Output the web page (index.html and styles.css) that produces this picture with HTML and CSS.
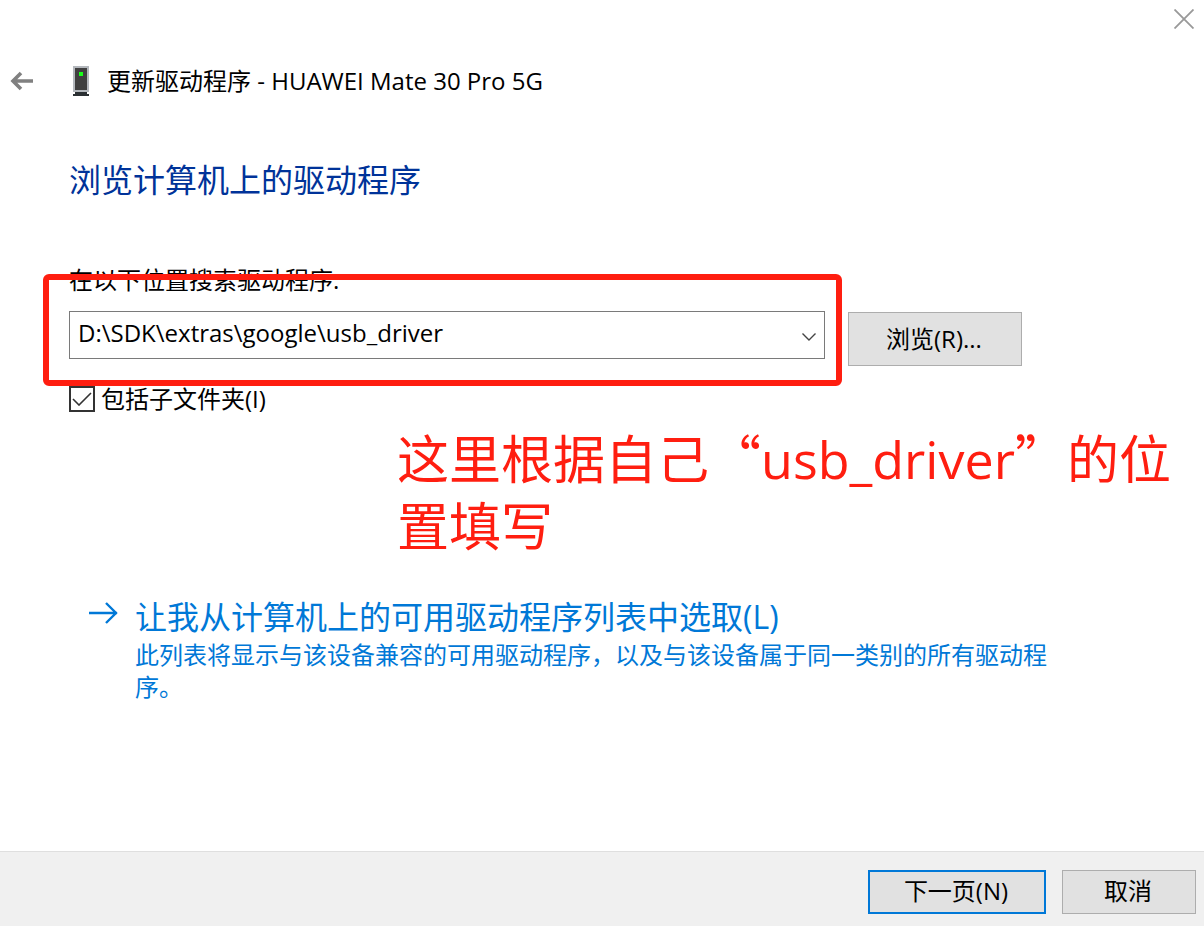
FILE: index.html
```
<!DOCTYPE html>
<html lang="zh-CN">
<head>
    <meta charset="UTF-8">
    <meta name="viewport" content="width=device-width, initial-scale=1.0">
    <title>更新驱动程序</title>
    <link rel="stylesheet" href="styles.css">
</head>
<body>

<div class="titlebar">
    <button type="button" class="icon-btn" aria-label="关闭">
        <svg width="20" height="20" viewBox="0 0 20 20"><path d="M0.5 0.5L19.5 19.5M19.5 0.5L0.5 19.5" stroke="#999" stroke-width="1.8"/></svg>
    </button>
</div>

<header class="header">
    <button type="button" class="icon-btn" aria-label="返回">
        <svg width="24" height="20" viewBox="0 0 24 20"><path d="M2 10H23M11 2L3 10L11 18" fill="none" stroke="#808080" stroke-width="3.6"/></svg>
    </button>
    <svg class="device" width="16" height="30" viewBox="0 0 16 30">
        <rect width="16" height="26" fill="#b4b8bd"/>
        <rect x="2" y="2" width="12" height="22" fill="#404040"/>
        <rect x="6" y="6" width="4" height="4" fill="#1aff1a"/>
        <rect x="2" y="26" width="12" height="2" fill="#2b3033"/>
        <rect y="28" width="16" height="2" fill="#2b3033"/>
    </svg>
    <span>更新驱动程序 - HUAWEI Mate 30 Pro 5G</span>
</header>

<main class="content">
    <h1>浏览计算机上的驱动程序</h1>

    <div class="search">
        <label for="path">在以下位置搜索驱动程序:</label>
        <div class="path-row">
            <div class="combo">
                <select id="path">
                    <option>D:\SDK\extras\google\usb_driver</option>
                </select>
                <svg class="chevron" width="14" height="8" viewBox="0 0 14 8"><path d="M0.5 0.5L7 7L13.5 0.5" fill="none" stroke="#444" stroke-width="1.4"/></svg>
            </div>
            <button type="button" class="btn browse">浏览(R)...</button>
        </div>
        <label class="check">
            <input type="checkbox" checked>
            <svg class="tick" width="20" height="14" viewBox="0 0 20 14"><path d="M1 7L7 13L19 1" fill="none" stroke="#333" stroke-width="1.6"/></svg>
            包括子文件夹(I)
        </label>
        <div class="mark"></div>
        <p class="note">这里根据自己<span class="quote">“</span>usb_driver<span class="quote">”</span>的位置填写</p>
    </div>

    <button type="button" class="command">
        <svg width="30" height="22" viewBox="0 0 30 22"><path d="M0 11H28M17 1L27 11L17 21" fill="none" stroke="#0078d7" stroke-width="2.4"/></svg>
        <span>
            <span class="command-title">让我从计算机上的可用驱动程序列表中选取(L)</span>
            <span class="command-text">此列表将显示与该设备兼容的可用驱动程序，以及与该设备属于同一类别的所有驱动程序。</span>
        </span>
    </button>
</main>

<footer class="footer">
    <button type="button" class="btn next">下一页(N)</button>
    <button type="button" class="btn cancel">取消</button>
</footer>

</body>
</html>
```
FILE: styles.css
```
* {
    box-sizing: border-box;
}
body {
    margin: 0;
    min-height: 100vh;
    display: flex;
    flex-direction: column;
    background-color: #fff;
    color: #000;
    font-family: "Open Sans", "Noto Sans CJK SC", sans-serif;
    font-size: 24px;
    line-height: 32px;
}
button, select, input {
    font: inherit;
    color: inherit;
    margin: 0;
}
svg {
    display: block;
    flex-shrink: 0;
}
.icon-btn {
    padding: 0;
    border: none;
    background: none;
}
.titlebar {
    display: flex;
    justify-content: flex-end;
    padding: 9px 10px 0;
}
.header {
    display: flex;
    align-items: center;
    padding: 36px 10px 0;
}
.device {
    margin: 0 18px 0 39px;
}
.content {
    flex: 1;
    padding: 0 69px;
}
h1 {
    margin: 61px 0 0;
    font-size: 32px;
    line-height: 44px;
    font-weight: 400;
    color: #003399;
}
.search {
    position: relative;
    margin-top: 62px;
}
.search > label {
    display: block;
}
.path-row {
    display: flex;
    align-items: flex-start;
    gap: 23px;
    margin-top: 15px;
}
.combo {
    position: relative;
    flex: 0 1 756px;
}
select {
    display: block;
    width: 100%;
    height: 48px;
    padding: 0 36px 4px 8px;
    border: 1px solid #7a7a7a;
    border-radius: 0;
    background-color: #fff;
    appearance: none;
}
.chevron {
    position: absolute;
    right: 9px;
    top: 22px;
    pointer-events: none;
}
.btn {
    padding: 0 2px 2px 0;
    border: 1px solid #adadad;
    background-color: #e1e1e1;
}
.browse {
    width: 174px;
    height: 54px;
    margin-top: 1px;
    padding-bottom: 0;
}
.search .check {
    position: relative;
    display: flex;
    align-items: center;
    gap: 6px;
    margin-top: 17px;
}
.check input {
    width: 26px;
    height: 26px;
    border: 2px solid #333;
    background-color: #fff;
    appearance: none;
}
.tick {
    position: absolute;
    left: 3px;
    top: 9px;
}
/* red frame around the path field */
.mark {
    position: absolute;
    left: -26px;
    top: 10px;
    width: 799px;
    height: 112px;
    border: 6px solid #ff1e10;
    border-radius: 6px;
    pointer-events: none;
}
.note {
    position: absolute;
    left: 328px;
    right: -48px;
    top: 159px;
    margin: 0;
    font-size: 52px;
    line-height: 67px;
    color: #ff1e10;
}
.quote {
    font-family: "Noto Sans CJK SC", sans-serif;
}
.command {
    display: flex;
    gap: 16px;
    margin-top: 179px;
    padding: 0 80px 0 20px;
    border: none;
    background: none;
    text-align: left;
    color: #0078d7;
}
.command svg {
    margin-top: 8px;
}
.command-title, .command-text {
    display: block;
}
.command-title {
    font-size: 32px;
    line-height: 45px;
}
.footer {
    display: flex;
    justify-content: flex-end;
    gap: 16px;
    padding: 18px 8px 12px;
    border-top: 1px solid #dfdfdf;
    background-color: #f0f0f0;
}
.footer .btn {
    height: 44px;
}
.next {
    width: 178px;
    border: 2px solid #0078d7;
}
.cancel {
    width: 134px;
}
```
